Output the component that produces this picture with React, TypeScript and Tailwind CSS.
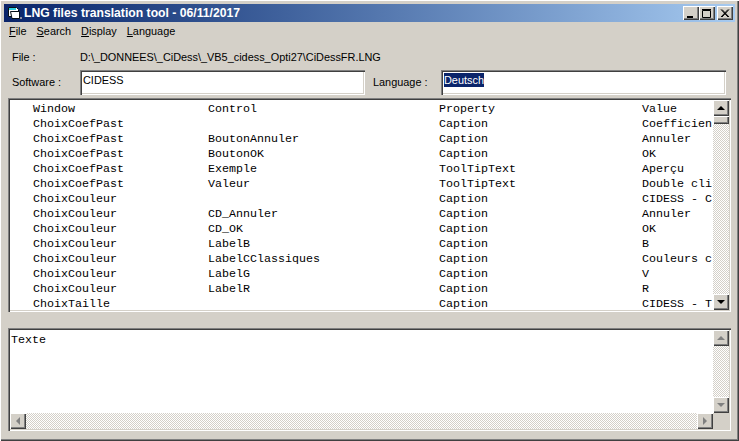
const sans = { fontFamily: '"Liberation Sans", Arial, sans-serif' };

const rows = [
  ["Window", "Control", "Property", "Value"],
  ["ChoixCoefPast", "", "Caption", "Coefficien"],
  ["ChoixCoefPast", "BoutonAnnuler", "Caption", "Annuler"],
  ["ChoixCoefPast", "BoutonOK", "Caption", "OK"],
  ["ChoixCoefPast", "Exemple", "ToolTipText", "Aperçu"],
  ["ChoixCoefPast", "Valeur", "ToolTipText", "Double cli"],
  ["ChoixCouleur", "", "Caption", "CIDESS - C"],
  ["ChoixCouleur", "CD_Annuler", "Caption", "Annuler"],
  ["ChoixCouleur", "CD_OK", "Caption", "OK"],
  ["ChoixCouleur", "LabelB", "Caption", "B"],
  ["ChoixCouleur", "LabelCClassiques", "Caption", "Couleurs c"],
  ["ChoixCouleur", "LabelG", "Caption", "V"],
  ["ChoixCouleur", "LabelR", "Caption", "R"],
  ["ChoixTaille", "", "Caption", "CIDESS - T"],
];

const raised =
  "bg-[#d4d0c8] shadow-[inset_1px_1px_0_#ffffff,inset_-1px_-1px_0_#404040,inset_-2px_-2px_0_#808080]";
const sunken =
  "bg-white shadow-[inset_1px_1px_0_#808080,inset_2px_2px_0_#404040,inset_-1px_-1px_0_#ffffff,inset_-2px_-2px_0_#d4d0c8]";
const track =
  "bg-[repeating-conic-gradient(#d4d0c8_0%_25%,#ffffff_0%_50%)] bg-[length:2px_2px]";

const Arrow = ({ dir, disabled }: { dir: "up" | "down" | "left" | "right"; disabled?: boolean }) => {
  const pts = {
    up: "4,2 0,6 8,6",
    down: "0,2 8,2 4,6",
    left: "6,0 6,8 2,4",
    right: "2,0 2,8 6,4",
  }[dir];
  return (
    <div className={`${raised} w-4 h-4 flex-none flex items-center justify-center`}>
      <svg width="8" height="8" viewBox="0 0 8 8">
        <polygon points={pts} fill={disabled ? "#808080" : "#000000"} />
      </svg>
    </div>
  );
};

const CaptionButton = ({ kind }: { kind: "min" | "max" | "close" }) => (
  <div className={`${raised} w-4 h-[14px] flex-none flex items-center justify-center`}>
    <svg width="10" height="9" viewBox="0 0 10 9">
      {kind === "min" && <rect x="1" y="7" width="6" height="2" fill="#000" />}
      {kind === "max" && (
        <path d="M0.5 1.5H8.5V8.5H0.5Z M0 0.5H9" fill="none" stroke="#000" strokeWidth="1" />
      )}
      {kind === "close" && (
        <path d="M1 0.5L8 8M2 0.5L9 8M8 0.5L1 8M9 0.5L2 8" stroke="#000" strokeWidth="1" fill="none" />
      )}
    </svg>
  </div>
);

const AppIcon = () => (
  <svg width="16" height="16" viewBox="0 0 16 16" className="flex-none">
    <path d="M0.5 2.5H8.5L10.5 4.5V11.5H0.5Z" fill="#ffffff" stroke="#081018" />
    <path d="M1 3H8V5H1Z" fill="#30d0e0" />
    <path d="M2.5 6.5H11.5V13.5H4Z" fill="#ffffff" stroke="#081018" />
    <path d="M12 12H14V14H12Z" fill="#9090a0" />
  </svg>
);

const Underlined = ({ first, rest }: { first: string; rest: string }) => (
  <span>
    <span className="underline">{first}</span>
    {rest}
  </span>
);

export default function App() {
  return (
    <div
      style={sans}
      className="w-[739px] h-[441px] overflow-hidden bg-[#d4d0c8] text-black text-[10.9px] flex flex-col pt-1 px-1 shadow-[inset_1px_1px_0_#ffffff,inset_-1px_-1px_0_#404040,inset_-2px_-2px_0_#808080]"
    >
      <div className="h-[18px] flex-none flex items-center pl-[4px] pr-[2px] bg-gradient-to-r from-[#0a246a] to-[#a6caf0]">
        <AppIcon />
        <span className="text-white font-bold text-[12.2px] leading-none">
          LNG files translation tool - 06/11/2017
        </span>
        <div className="ml-auto flex items-center">
          <CaptionButton kind="min" />
          <CaptionButton kind="max" />
          <div className="w-[2px]" />
          <CaptionButton kind="close" />
        </div>
      </div>

      <div className="h-[19px] flex-none flex items-center pl-[5px] gap-[10px] leading-none">
        <Underlined first="F" rest="ile" />
        <Underlined first="S" rest="earch" />
        <Underlined first="D" rest="isplay" />
        <Underlined first="L" rest="anguage" />
      </div>

      <div className="h-[29px] flex-none flex items-center pl-2 pt-[3px]">
        <span className="w-[68px]">File :</span>
        <span>D:\_DONNEES\_CiDess\_VB5_cidess_Opti27\CiDessFR.LNG</span>
      </div>

      <div className="h-[25px] flex-none flex items-center pl-2 pr-[9px]">
        <span className="w-[68px]">Software :</span>
        <div className={`${sunken} w-[285px] h-[25px] pl-[3px] pt-[3px] leading-[14px]`}>CIDESS</div>
        <span className="ml-[8px] w-[68px]">Language :</span>
        <div className={`${sunken} w-[285px] h-[25px] pl-[3px] pt-[3px] leading-[14px]`}>
          <span className="bg-[#0a246a] text-white inline-block">Deutsch</span>
        </div>
      </div>

      <div className={`${sunken} mt-[3px] mx-1 h-[214px] flex-none flex p-[2px]`}>
        <div className="flex-1 min-w-0 pt-[2px]">
          {rows.map((r, i) => (
            <div
              key={i}
              className="h-[15px] flex whitespace-nowrap text-[11.67px] leading-[15px] [font-family:'Liberation_Mono',monospace]"
            >
              <span className="ml-[23px] w-[175px] flex-none">{r[0]}</span>
              <span className="w-[231px] flex-none">{r[1]}</span>
              <span className="w-[203px] flex-none">{r[2]}</span>
              <span className="flex-none">{r[3]}</span>
            </div>
          ))}
        </div>
        <div className={`${track} w-4 flex-none flex flex-col`}>
          <Arrow dir="up" />
          <div className={`${raised} w-4 h-2 flex-none`} />
          <div className="flex-1" />
          <Arrow dir="down" />
        </div>
      </div>

      <div className={`${sunken} mt-[16px] mx-1 h-[103px] flex-none flex flex-col p-[2px]`}>
        <div className="flex-1 min-h-0 flex">
          <div className="flex-1 pl-px pt-[3px] text-[11.67px] leading-[15px] [font-family:'Liberation_Mono',monospace]">
            Texte
          </div>
          <div className={`${track} w-4 flex-none flex flex-col justify-between`}>
            <Arrow dir="up" disabled />
            <Arrow dir="down" disabled />
          </div>
        </div>
        <div className="h-4 flex-none flex">
          <div className={`${track} flex-1 flex justify-between`}>
            <Arrow dir="left" disabled />
            <Arrow dir="right" disabled />
          </div>
          <div className="w-4 flex-none bg-[#d4d0c8]" />
        </div>
      </div>
    </div>
  );
}
